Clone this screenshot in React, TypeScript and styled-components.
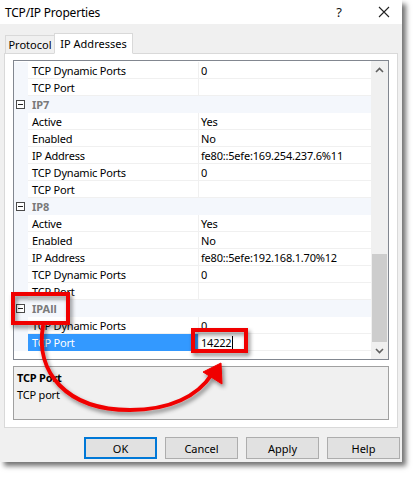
import React from "react";
import styled, { createGlobalStyle } from "styled-components";

const Global = createGlobalStyle`
  html, body { margin: 0; padding: 0; background: #ffffff; }
  body { font-family: "Noto Sans", "Segoe UI", sans-serif; font-size: 11px; color: #000; }
  * { box-sizing: border-box; }
`;

const Stage = styled.div`
  position: relative;
  width: 417px;
  height: 478px;
`;

const Window = styled.div`
  width: 402px;
  height: 462px;
  background: #f0f0f0;
  box-shadow: 4px 4px 5px rgba(0, 0, 0, 0.55);
  display: flex;
  flex-direction: column;
`;

const TitleBar = styled.div`
  height: 24px;
  background: #ffffff;
  display: flex;
  align-items: center;
  padding-left: 5px;
  font-size: 12px;
  letter-spacing: -0.2px;
`;

const Title = styled.span`
  flex: 1;
`;

const TitleButton = styled.span<{ $w: number; $gap?: number }>`
  width: ${(p) => p.$w}px;
  margin-right: ${(p) => p.$gap ?? 0}px;
  display: flex;
  justify-content: center;
  font-size: 13px;
  color: #111;
`;

const TabStrip = styled.div`
  display: flex;
  align-items: flex-end;
  height: 30px;
  padding: 0 0 0 5px;
  position: relative;
  z-index: 1;
  margin-bottom: -1px;
`;

const Tab = styled.div<{ $active?: boolean; $w: number }>`
  width: ${(p) => p.$w}px;
  height: ${(p) => (p.$active ? 21 : 19)}px;
  display: flex;
  align-items: center;
  justify-content: center;
  border: 1px solid #d9d9d9;
  border-bottom: ${(p) => (p.$active ? "1px solid #ffffff" : "1px solid #d9d9d9")};
  background: ${(p) => (p.$active ? "#ffffff" : "#f0f0f0")};
  margin-left: ${(p) => (p.$active ? -1 : 0)}px;
  font-size: 11px;
`;

const TabPanel = styled.div`
  margin: 0 4px;
  height: 375px;
  border: 1px solid #d9d9d9;
  background: #ffffff;
  padding: 6px 8px 0 8px;
  display: flex;
  flex-direction: column;
  gap: 6px;
`;

const Grid = styled.div`
  height: 300px;
  border: 1px solid #828790;
  background: #ffffff;
  display: flex;
`;

const Rows = styled.div`
  flex: 1;
  padding-top: 1px;
  display: flex;
  flex-direction: column;
`;

const Row = styled.div<{ $category?: boolean }>`
  height: 17px;
  display: grid;
  grid-template-columns: 14px 171px 1fr;
  background: ${(p) => (p.$category ? "#f4f7fc" : "#ffffff")};
`;

const Gutter = styled.div`
  background: #f4f7fc;
  display: flex;
  align-items: center;
  padding-left: 2px;
`;

const Toggle = styled.span`
  width: 9px;
  height: 9px;
  border: 1px solid #4a4a4a;
  position: relative;
  background: #fff;
  &::after {
    content: "";
    position: absolute;
    left: 1px;
    right: 1px;
    top: 3px;
    height: 1px;
    background: #222;
  }
`;

const CategoryName = styled.div`
  grid-column: 2 / 4;
  padding-left: 4px;
  display: flex;
  align-items: center;
  font-weight: 700;
  color: #7a7a7a;
`;

const NameCell = styled.div<{ $selected?: boolean }>`
  padding-left: 4px;
  display: flex;
  align-items: center;
  border-bottom: 1px solid ${(p) => (p.$selected ? "#3399ff" : "#f0f0f0")};
  border-right: 1px solid #f0f0f0;
  background: ${(p) => (p.$selected ? "#3399ff" : "transparent")};
  color: ${(p) => (p.$selected ? "#ffffff" : "#000")};
  white-space: nowrap;
  letter-spacing: -0.2px;
`;

const ValueCell = styled.div`
  padding-left: 2px;
  display: flex;
  align-items: center;
  border-bottom: 1px solid #f0f0f0;
  white-space: nowrap;
  letter-spacing: -0.2px;
`;

const Caret = styled.span`
  width: 1px;
  height: 13px;
  background: #000;
  margin-left: 1px;
`;

const ScrollBar = styled.div`
  width: 17px;
  background: #f0f0f0;
  display: flex;
  flex-direction: column;
`;

const ScrollArrow = styled.div`
  height: 17px;
  display: flex;
  align-items: center;
  justify-content: center;
`;

const Track = styled.div`
  flex: 1;
  display: flex;
  flex-direction: column;
  justify-content: flex-end;
  padding: 0 1px 0 1px;
`;

const Thumb = styled.div`
  height: 88px;
  background: #cdcdcd;
`;

const Description = styled.div`
  height: 54px;
  border: 1px solid #a0a0a0;
  background: #f0f0f0;
  padding: 2px 3px;
  display: flex;
  flex-direction: column;
  line-height: 17px;
  letter-spacing: -0.2px;
`;

const DescTitle = styled.div`
  font-weight: 700;
`;

const ButtonRow = styled.div`
  display: flex;
  justify-content: flex-end;
  gap: 8px;
  padding: 9px 2px 0 0;
`;

const Button = styled.div<{ $default?: boolean }>`
  width: 73px;
  height: 22px;
  background: #e1e1e1;
  border: ${(p) => (p.$default ? "2px solid #0078d7" : "1px solid #adadad")};
  display: flex;
  align-items: center;
  justify-content: center;
  font-size: 11px;
`;

const Overlay = styled.svg`
  position: absolute;
  left: 0;
  top: 0;
  pointer-events: none;
`;

type Item =
  | { kind: "cat"; name: string }
  | { kind: "prop"; name: string; value: string; selected?: boolean; editing?: boolean };

const items: Item[] = [
  { kind: "prop", name: "TCP Dynamic Ports", value: "0" },
  { kind: "prop", name: "TCP Port", value: "" },
  { kind: "cat", name: "IP7" },
  { kind: "prop", name: "Active", value: "Yes" },
  { kind: "prop", name: "Enabled", value: "No" },
  { kind: "prop", name: "IP Address", value: "fe80::5efe:169.254.237.6%11" },
  { kind: "prop", name: "TCP Dynamic Ports", value: "0" },
  { kind: "prop", name: "TCP Port", value: "" },
  { kind: "cat", name: "IP8" },
  { kind: "prop", name: "Active", value: "Yes" },
  { kind: "prop", name: "Enabled", value: "No" },
  { kind: "prop", name: "IP Address", value: "fe80::5efe:192.168.1.70%12" },
  { kind: "prop", name: "TCP Dynamic Ports", value: "0" },
  { kind: "prop", name: "TCP Port", value: "" },
  { kind: "cat", name: "IPAll" },
  { kind: "prop", name: "TCP Dynamic Ports", value: "0" },
  { kind: "prop", name: "TCP Port", value: "14222", selected: true, editing: true },
];

const Chevron = ({ up }: { up?: boolean }) => (
  <svg width="9" height="6" viewBox="0 0 9 6">
    <path
      d={up ? "M1 5 L4.5 1.5 L8 5" : "M1 1 L4.5 4.5 L8 1"}
      fill="none"
      stroke="#606060"
      strokeWidth="1.6"
    />
  </svg>
);

export default function App() {
  return (
    <Stage>
      <Global />
      <Window>
        <TitleBar>
          <Title>TCP/IP Properties</Title>
          <TitleButton $w={20} $gap={17}>?</TitleButton>
          <TitleButton $w={36}>
            <svg width="12" height="12" viewBox="0 0 12 12">
              <path d="M1 1 L11 11 M11 1 L1 11" stroke="#222" strokeWidth="1.1" />
            </svg>
          </TitleButton>
        </TitleBar>
        <TabStrip>
          <Tab $w={50}>Protocol</Tab>
          <Tab $active $w={79}>IP Addresses</Tab>
        </TabStrip>
        <TabPanel>
          <Grid>
            <Rows>
              {items.map((it, i) =>
                it.kind === "cat" ? (
                  <Row key={i} $category>
                    <Gutter>
                      <Toggle />
                    </Gutter>
                    <CategoryName>{it.name}</CategoryName>
                  </Row>
                ) : (
                  <Row key={i}>
                    <Gutter />
                    <NameCell $selected={it.selected}>{it.name}</NameCell>
                    <ValueCell>
                      {it.value}
                      {it.editing && <Caret />}
                    </ValueCell>
                  </Row>
                )
              )}
            </Rows>
            <ScrollBar>
              <ScrollArrow>
                <Chevron up />
              </ScrollArrow>
              <Track>
                <Thumb />
              </Track>
              <ScrollArrow>
                <Chevron />
              </ScrollArrow>
            </ScrollBar>
          </Grid>
          <Description>
            <DescTitle>TCP Port</DescTitle>
            <div>TCP port</div>
          </Description>
        </TabPanel>
        <ButtonRow>
          <Button $default>OK</Button>
          <Button>Cancel</Button>
          <Button>Apply</Button>
          <Button>Help</Button>
        </ButtonRow>
      </Window>
      <Overlay width="417" height="478" viewBox="0 0 417 478">
        <defs>
          <filter id="callout-shadow" x="-20%" y="-20%" width="140%" height="140%">
            <feDropShadow dx="2" dy="3" stdDeviation="2" floodColor="#000" floodOpacity="0.45" />
          </filter>
        </defs>
        <g filter="url(#callout-shadow)" fill="none" stroke="#f00000" strokeWidth="4">
          <rect x="13" y="294" width="55" height="29" />
          <rect x="193" y="330" width="53" height="21" />
          <path d="M43 326 C 35 372, 66 410, 130 410 C 170 410, 198 396, 212 374" strokeLinecap="round" />
          <path d="M221 363 L 203 372 L 222 384 Z" fill="#f00000" stroke="#f00000" strokeWidth="1" strokeLinejoin="round" />
        </g>
      </Overlay>
    </Stage>
  );
}
